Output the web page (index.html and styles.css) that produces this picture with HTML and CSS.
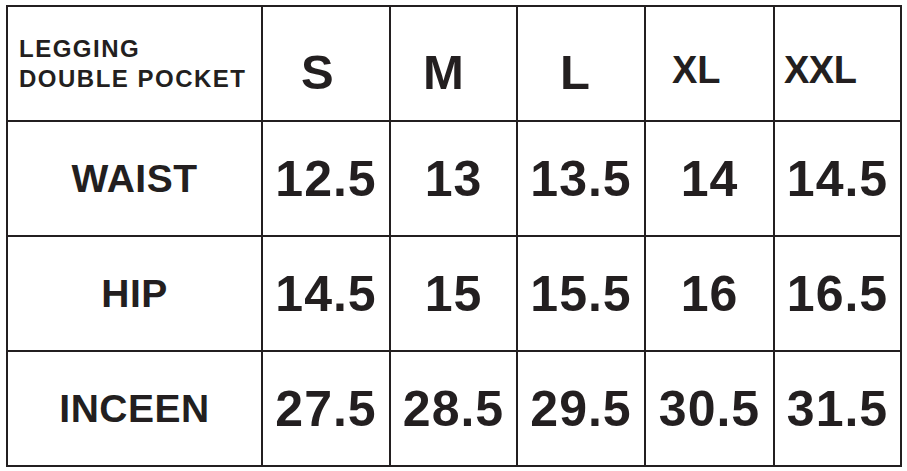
FILE: index.html
```html
<!DOCTYPE html>
<html>
<head>
<meta charset="utf-8">
<link rel="stylesheet" href="styles.css">
</head>
<body>
<div class="chart">
  <div class="cell corner"><span>LEGGING</span><span>DOUBLE POCKET</span></div>
  <div class="cell size size-s">S</div>
  <div class="cell size size-m">M</div>
  <div class="cell size size-l">L</div>
  <div class="cell size size-xl">XL</div>
  <div class="cell size size-xxl">XXL</div>

  <div class="cell label">WAIST</div>
  <div class="cell num">12.5</div>
  <div class="cell num">13</div>
  <div class="cell num">13.5</div>
  <div class="cell num">14</div>
  <div class="cell num">14.5</div>

  <div class="cell label">HIP</div>
  <div class="cell num">14.5</div>
  <div class="cell num">15</div>
  <div class="cell num">15.5</div>
  <div class="cell num">16</div>
  <div class="cell num">16.5</div>

  <div class="cell label">INCEEN</div>
  <div class="cell num">27.5</div>
  <div class="cell num">28.5</div>
  <div class="cell num">29.5</div>
  <div class="cell num">30.5</div>
  <div class="cell num">31.5</div>
</div>
</body>
</html>
```
FILE: styles.css
```css
html, body {
  margin: 0;
  padding: 0;
  background: #ffffff;
}
body {
  padding: 5px 0 0 6px;
  font-family: "Liberation Sans", Arial, sans-serif;
  font-weight: bold;
  color: #231f20;
}
.chart {
  display: grid;
  grid-template-columns: 253px 126px 125px 126px 127px 125px;
  grid-template-rows: repeat(4, 113px);
  gap: 2px;
  padding: 2px;
  width: max-content;
  background: #231f20;
}
.cell {
  background: #ffffff;
  display: flex;
  align-items: center;
  justify-content: center;
  white-space: nowrap;
}
.corner {
  flex-direction: column;
  align-items: flex-start;
  justify-content: center;
  padding-left: 11px;
  font-size: 24px;
  line-height: 30px;
  letter-spacing: 1.5px;
}
.size {
  justify-content: flex-start;
  align-items: flex-start;
  line-height: 1;
}
.size-s, .size-m, .size-l {
  font-size: 49px;
  padding-top: 41px;
}
.size-s { padding-left: 38px; }
.size-m { padding-left: 32px; }
.size-l { padding-left: 42px; }
.size-xl, .size-xxl {
  font-size: 38px;
  padding-top: 44px;
}
.size-xl { padding-left: 26px; }
.size-xxl { padding-left: 9px; letter-spacing: -0.5px; }
.label {
  font-size: 39px;
  letter-spacing: 0.5px;
}
.num {
  font-size: 50px;
  letter-spacing: 1px;
}
```
